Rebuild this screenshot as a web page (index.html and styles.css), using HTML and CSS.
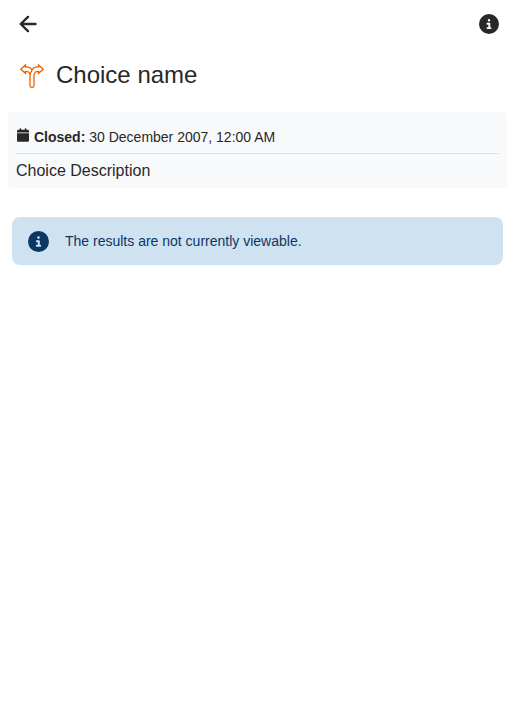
FILE: index.html
```html
<!DOCTYPE html>
<html lang="en">
<head>
<meta charset="utf-8">
<title>Choice name</title>
<link rel="stylesheet" href="styles.css">
</head>
<body>
<header class="toolbar">
  <svg class="back" viewBox="0 0 18 20" aria-label="Back"><path d="M9 2.9 1.7 10 9 17.1M2 10h14.5"/></svg>
  <svg class="info" viewBox="0 0 512 512" aria-label="Info"><path d="M256 512A256 256 0 1 0 256 0a256 256 0 1 0 0 512zM216 336l24 0 0-64-24 0c-13.3 0-24-10.7-24-24s10.7-24 24-24l48 0c13.3 0 24 10.7 24 24l0 88 8 0c13.3 0 24 10.7 24 24s-10.7 24-24 24l-80 0c-13.3 0-24-10.7-24-24s10.7-24 24-24zm40-208a32 32 0 1 1 0 64 32 32 0 1 1 0-64z"/></svg>
</header>
<main>
  <div class="title">
    <svg class="module-icon" viewBox="0 0 24 24"><path d="M10 21.8V11.5C10 8.8 8.6 7.2 5.3 7.4L5.6 9.6.7 5.2 5.6 .8 5.3 3C8.8 2.6 11 3.9 12 6.2 13 3.9 15.2 2.6 18.7 3L18.4 .8 23.3 5.2 18.4 9.6 18.7 7.4C15.4 7.2 14 8.8 14 11.5V21.8Q14 23.3 12.7 23.3H11.3Q10 23.3 10 21.8ZM12 6.2Q10.2 8.2 10 11.5"/></svg>
    <h1>Choice name</h1>
  </div>
  <section class="details">
    <p class="date"><svg class="calendar" viewBox="0 0 448 512"><path d="M96 32l0 32L48 64C21.5 64 0 85.5 0 112l0 48 448 0 0-48c0-26.5-21.5-48-48-48l-48 0 0-32c0-17.7-14.3-32-32-32s-32 14.3-32 32l0 32L160 64l0-32c0-17.7-14.3-32-32-32S96 14.3 96 32zM448 192L0 192 0 464c0 26.5 21.5 48 48 48l352 0c26.5 0 48-21.5 48-48l0-272z"/></svg><span><strong>Closed:</strong> 30 December 2007, 12:00 AM</span></p>
    <p class="description">Choice Description</p>
  </section>
  <section class="notice">
    <svg class="notice-icon" viewBox="0 0 512 512"><path d="M256 512A256 256 0 1 0 256 0a256 256 0 1 0 0 512zM216 336l24 0 0-64-24 0c-13.3 0-24-10.7-24-24s10.7-24 24-24l48 0c13.3 0 24 10.7 24 24l0 88 8 0c13.3 0 24 10.7 24 24s-10.7 24-24 24l-80 0c-13.3 0-24-10.7-24-24s10.7-24 24-24zm40-208a32 32 0 1 1 0 64 32 32 0 1 1 0-64z"/></svg>
    <p>The results are not currently viewable.</p>
  </section>
</main>
</body>
</html>
```
FILE: styles.css
```css
* { box-sizing: border-box; }
body {
  margin: 0;
  background: #fff;
  color: #282828;
  font-family: "Liberation Sans", Arial, sans-serif;
}
h1, p { margin: 0; }
svg { display: block; flex: none; fill: currentColor; }
.toolbar {
  display: flex;
  align-items: center;
  justify-content: space-between;
  height: 48px;
  padding: 0 16px 0 19px;
}
.back {
  width: 18px;
  height: 20px;
  fill: none;
  stroke: currentColor;
  stroke-width: 2.4;
  stroke-linecap: round;
  stroke-linejoin: round;
}
.info { width: 20px; height: 20px; }
.title {
  display: flex;
  align-items: center;
  gap: 12px;
  height: 64px;
  padding: 0 20px 8px;
}
.title h1 { font-size: 24px; font-weight: 400; line-height: 28px; padding-bottom: 2px; }
.module-icon {
  width: 24px;
  height: 24px;
  fill: none;
  stroke: #eb6200;
  stroke-width: 1.3;
  stroke-linejoin: round;
  stroke-linecap: round;
}
.details {
  height: 76px;
  margin: 0 8px;
  padding: 8px;
  border-radius: 4px;
  background: #f8f9fa;
}
.date {
  display: flex;
  align-items: center;
  gap: 5px;
  height: 34px;
  padding: 0 1px;
  border-bottom: 1px solid #dee2e6;
  font-size: 14px;
}
.calendar { width: 12px; height: 14px; margin-bottom: 3px; }
.description { font-size: 16px; line-height: 24px; padding-top: 5px; }
.notice {
  display: flex;
  align-items: center;
  gap: 16px;
  height: 48px;
  margin: 29px 12px 0;
  padding: 0 16px;
  border-radius: 8px;
  background: #cfe2f2;
  color: #0b3764;
  font-size: 14px;
}
.notice-icon { width: 21px; height: 21px; }
```
